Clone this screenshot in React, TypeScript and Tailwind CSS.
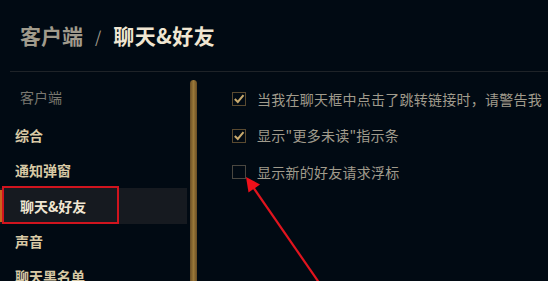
import React from "react";

const font = { fontFamily: '"Noto Sans CJK SC", "Noto Sans", sans-serif' };

function Check({ checked }: { checked: boolean }) {
  return (
    <div className={`w-[14px] h-[14px] border-[1.5px] flex items-center justify-center shrink-0 ${checked ? "border-[#5a4a30]" : "border-[#4a4740]"}`}>
      {checked && (
        <svg width="12" height="12" viewBox="0 0 12 12">
          <path d="M1.8 6 L4.8 9 L10.5 2.2" stroke="#c8aa6e" strokeWidth="2" fill="none" />
        </svg>
      )}
    </div>
  );
}

export default function App() {
  const items = ["综合", "通知弹窗", "聊天&好友", "声音", "聊天黑名单"];
  const opts: [string, boolean][] = [
    ["当我在聊天框中点击了跳转链接时，请警告我", true],
    ["显示\"更多未读\"指示条", true],
    ["显示新的好友请求浮标", false],
  ];
  return (
    <div className="relative w-[548px] h-[281px] overflow-hidden bg-[#010a13]" style={font}>
      <div className="h-[71px] flex items-center pl-[20px] gap-[12px] text-[21px] font-bold">
        <span className="text-[#a09b8c]">客户端</span>
        <span className="text-[#a09b8c] text-[16px] font-normal">/</span>
        <span className="text-[#f0e6d2] tracking-[0.5px]">聊天&amp;好友</span>
      </div>
      <div className="ml-[10px] h-[1px] bg-[#1e2328]" />
      <div className="flex">
        <div className="w-[190px] shrink-0">
          <div className="pt-[15px] h-[46px] pl-[20px] text-[14px] leading-[20px] text-[#7a7870]">客户端</div>
          {items.map((it) =>
            it === "聊天&好友" ? (
              <div key={it} className="relative h-[36px] bg-[#161a20] flex items-center pl-[20px] w-[187px]">
                <div className="absolute left-0 top-[2px] bottom-[2px] w-[3px] bg-[#c8641e]" />
                <div className="absolute left-[2px] top-[-2px] w-[117px] h-[38px] border-2 border-[#d0141e]" />
                <span className="text-[14px] font-bold text-[#f0e6d2]">{it}</span>
              </div>
            ) : (
              <div key={it} className="h-[35px] flex items-center pl-[15px] text-[14px] font-bold text-[#d8c9a5]">
                {it}
              </div>
            )
          )}
        </div>
        <div className="w-[7px] mt-[8px] h-[220px] rounded-t-full bg-gradient-to-r from-[#6a4e24] via-[#9a7838] to-[#6a4e24]" />
        <div className="flex-1 pl-[35px] pt-[9px]">
          {opts.map(([t, c]) => (
            <div key={t} className="h-[36.5px] flex items-center gap-[11px]">
              <Check checked={c} />
              <span className="text-[14px] text-[#a09b8c] whitespace-nowrap tracking-[0.25px]">{t}</span>
            </div>
          ))}
        </div>
      </div>
      <svg className="absolute left-0 top-0 pointer-events-none" width="548" height="281">
        <line x1="320" y1="284" x2="253" y2="187" stroke="#e0141e" strokeWidth="2.2" />
        <polygon points="246,177 260,184.5 248.5,192.5" fill="#f0101a" />
      </svg>
    </div>
  );
}
